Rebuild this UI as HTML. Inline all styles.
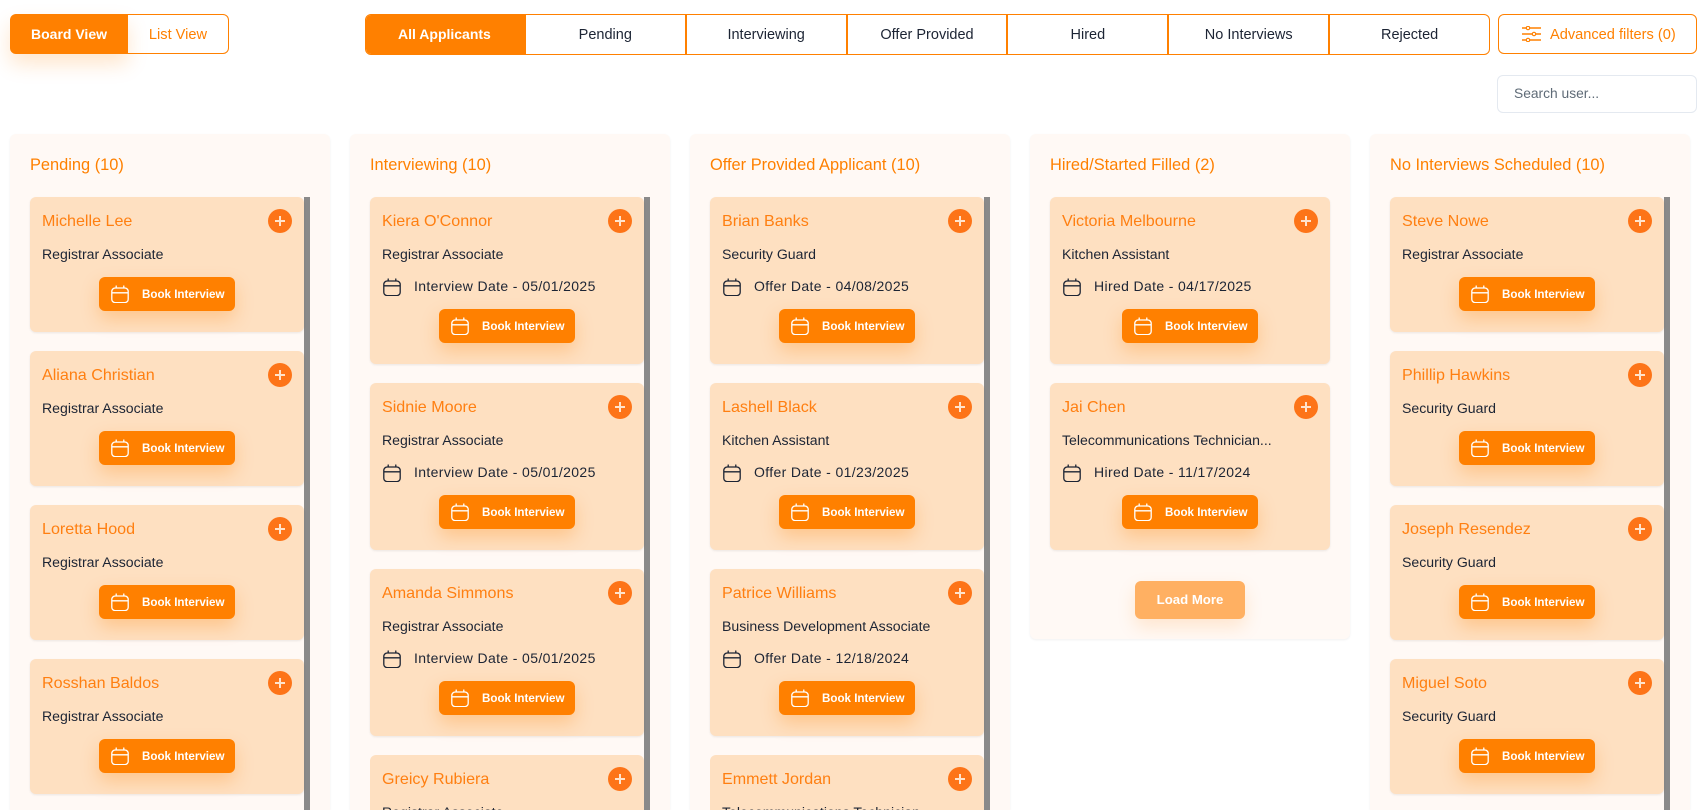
<!DOCTYPE html>
<html lang="en">
<head>
<meta charset="utf-8">
<title>Applicants Board</title>
<style>
*{box-sizing:border-box;margin:0;padding:0}
html,body{width:1708px;height:810px;overflow:hidden;background:#fff}
body{position:relative;font-family:"Liberation Sans",sans-serif;color:#1c2434;font-size:14px}
.view{position:absolute;top:14px;height:40px;text-align:center;font-size:14px}
#bv{left:10px;width:118px;background:#ff8000;color:#fff;font-weight:bold;border-radius:6px 0 0 6px;box-shadow:0 10px 20px rgba(255,128,0,.2);line-height:40px}
#lv{left:128px;width:101px;border:1px solid #ff8000;border-left:0;color:#ff8000;border-radius:0 6px 6px 0;line-height:40px;font-size:14.6px}
#tabs{position:absolute;left:365px;top:14px;width:1125px;height:41px;border:1px solid #ff8000;border-radius:6px;display:flex;overflow:hidden;background:#fff}
#tabs div{flex:1;line-height:40px;text-align:center;font-size:14.5px;color:#1c2434;border-left:2px solid #ff8000}
#tabs div:first-child{border-left:0;background:#ff8000;color:#fff;font-weight:bold;font-size:14px;margin:-1px 0 -1px -1px;line-height:41px}
#adv{position:absolute;left:1498px;top:14px;width:199px;height:40px;border:1px solid #ff8000;border-radius:6px;color:#ff8000;font-size:14.6px;line-height:40px;padding-left:51px}
#adv svg{position:absolute;left:23px;top:11px}
#search{position:absolute;left:1497px;top:75px;width:200px;height:38px;border:1px solid #e4e9f0;border-radius:6px;line-height:35px;padding-left:16px;color:#5f6b77;font-size:13.800px}
.col{position:absolute;top:134px;width:320px;height:676px;overflow:hidden;background:#fff9f5;border-radius:6px 6px 0 0;box-shadow:0 1px 2px rgba(0,0,0,.06)}
.col.short{height:505px;border-radius:6px}
.col h3{position:absolute;left:20px;top:21px;font-weight:normal;font-size:16.400px;line-height:20px;color:#ff8000;white-space:nowrap}
.bar{position:absolute;left:294px;top:63px;width:6px;height:613px;background:#8a8a8a}
.card{position:absolute;left:20px;width:274px;height:135px;background:#fee0c1;border-radius:6px;box-shadow:0 1px 2px rgba(0,0,0,.08)}
.short .card{width:280px}
.card.d{height:167px}
.card.cut{height:55px;overflow:hidden;border-radius:6px 6px 0 0;box-shadow:none}
.n{position:absolute;left:12px;top:14px;font-size:16.100px;line-height:20px;color:#ff7f11;white-space:nowrap}
.p{position:absolute;left:238px;top:12px;width:24px;height:24px;border-radius:50%;background:#fd7418}
.short .p{left:244px}
.p:before{content:"";position:absolute;left:7px;top:11.200px;width:10px;height:1.600px;background:#ffe3cc}
.p:after{content:"";position:absolute;left:11.200px;top:7px;width:1.600px;height:10px;background:#ffe3cc}
.r{position:absolute;left:12px;top:48px;font-size:14.100px;line-height:18px;white-space:nowrap;color:#1c2434}
.i{position:absolute;left:13px;top:81px}
.dt{position:absolute;left:44px;top:80px;font-size:14px;letter-spacing:.36px;line-height:18px;white-space:nowrap;color:#1c2434}
.b{position:absolute;left:69px;top:80px;width:136px;height:34px;background:#ff8000;border-radius:6px;box-shadow:0 8px 18px rgba(255,128,0,.28);color:#fff;font-weight:bold;font-size:11.600px;line-height:35px;padding-left:43px;white-space:nowrap}
.short .b{left:72px}
.d .b{top:112px}
.b svg{position:absolute;left:12px;top:8px}
#lm{position:absolute;left:105px;top:447px;width:110px;height:38px;background:#ffb062;border-radius:6px;color:#fff;font-weight:bold;font-size:13.200px;line-height:37px;text-align:center;box-shadow:0 8px 18px rgba(255,128,0,.16)}
</style>
</head>
<body>
<svg width="0" height="0" style="position:absolute"><defs>
<symbol id="cal" viewBox="0 0 18 18"><path d="M4.2 3h9.6a3.4 3.4 0 0 1 3.4 3.4v7.8a3.4 3.4 0 0 1-3.4 3.4H4.2a3.4 3.4 0 0 1-3.4-3.4V6.400a3.400 3.400 0 0 1 3.400-3.400zM.8 7.800h16.400M5.200 1v2M12.800 1v2" fill="none" stroke="currentColor" stroke-width="1.300" stroke-linecap="round"/></symbol>
</defs></svg>

<div class="view" id="bv">Board View</div>
<div class="view" id="lv">List View</div>

<div id="tabs"><div>All Applicants</div><div>Pending</div><div>Interviewing</div><div>Offer Provided</div><div>Hired</div><div>No Interviews</div><div>Rejected</div></div>

<div id="adv"><svg width="19" height="16" viewBox="0 0 19 16"><path d="M0 2h4M8 2h11M0 8h10M14 8h5M0 14h4M8 14h11" stroke="#ff8000" stroke-width="1.4" fill="none"/><circle cx="6" cy="2" r="1.7" fill="none" stroke="#ff8000" stroke-width="1.2"/><circle cx="12" cy="8" r="1.7" fill="none" stroke="#ff8000" stroke-width="1.2"/><circle cx="6" cy="14" r="1.7" fill="none" stroke="#ff8000" stroke-width="1.2"/></svg>Advanced filters (0)</div>
<div id="search">Search user...</div>

<div class="col" style="left:10px">
<h3>Pending (10)</h3><div class="bar"></div>
<div class="card" style="top:63px"><div class="n">Michelle Lee</div><div class="p"></div><div class="r">Registrar Associate</div><div class="b"><svg width="18" height="18"><use href="#cal"/></svg>Book Interview</div></div>
<div class="card" style="top:217px"><div class="n">Aliana Christian</div><div class="p"></div><div class="r">Registrar Associate</div><div class="b"><svg width="18" height="18"><use href="#cal"/></svg>Book Interview</div></div>
<div class="card" style="top:371px"><div class="n">Loretta Hood</div><div class="p"></div><div class="r">Registrar Associate</div><div class="b"><svg width="18" height="18"><use href="#cal"/></svg>Book Interview</div></div>
<div class="card" style="top:525px"><div class="n">Rosshan Baldos</div><div class="p"></div><div class="r">Registrar Associate</div><div class="b"><svg width="18" height="18"><use href="#cal"/></svg>Book Interview</div></div>
</div>

<div class="col" style="left:350px">
<h3>Interviewing (10)</h3><div class="bar"></div>
<div class="card d" style="top:63px"><div class="n">Kiera O'Connor</div><div class="p"></div><div class="r">Registrar Associate</div><svg class="i" width="18" height="18"><use href="#cal"/></svg><div class="dt">Interview Date - 05/01/2025</div><div class="b"><svg width="18" height="18"><use href="#cal"/></svg>Book Interview</div></div>
<div class="card d" style="top:249px"><div class="n">Sidnie Moore</div><div class="p"></div><div class="r">Registrar Associate</div><svg class="i" width="18" height="18"><use href="#cal"/></svg><div class="dt">Interview Date - 05/01/2025</div><div class="b"><svg width="18" height="18"><use href="#cal"/></svg>Book Interview</div></div>
<div class="card d" style="top:435px"><div class="n">Amanda Simmons</div><div class="p"></div><div class="r">Registrar Associate</div><svg class="i" width="18" height="18"><use href="#cal"/></svg><div class="dt">Interview Date - 05/01/2025</div><div class="b"><svg width="18" height="18"><use href="#cal"/></svg>Book Interview</div></div>
<div class="card cut" style="top:621px"><div class="n">Greicy Rubiera</div><div class="p"></div><div class="r">Registrar Associate</div></div>
</div>

<div class="col" style="left:690px">
<h3>Offer Provided Applicant (10)</h3><div class="bar"></div>
<div class="card d" style="top:63px"><div class="n">Brian Banks</div><div class="p"></div><div class="r">Security Guard</div><svg class="i" width="18" height="18"><use href="#cal"/></svg><div class="dt">Offer Date - 04/08/2025</div><div class="b"><svg width="18" height="18"><use href="#cal"/></svg>Book Interview</div></div>
<div class="card d" style="top:249px"><div class="n">Lashell Black</div><div class="p"></div><div class="r">Kitchen Assistant</div><svg class="i" width="18" height="18"><use href="#cal"/></svg><div class="dt">Offer Date - 01/23/2025</div><div class="b"><svg width="18" height="18"><use href="#cal"/></svg>Book Interview</div></div>
<div class="card d" style="top:435px"><div class="n">Patrice Williams</div><div class="p"></div><div class="r">Business Development Associate</div><svg class="i" width="18" height="18"><use href="#cal"/></svg><div class="dt">Offer Date - 12/18/2024</div><div class="b"><svg width="18" height="18"><use href="#cal"/></svg>Book Interview</div></div>
<div class="card cut" style="top:621px"><div class="n">Emmett Jordan</div><div class="p"></div><div class="r">Telecommunications Technician</div></div>
</div>

<div class="col short" style="left:1030px">
<h3>Hired/Started Filled (2)</h3>
<div class="card d" style="top:63px"><div class="n">Victoria Melbourne</div><div class="p"></div><div class="r">Kitchen Assistant</div><svg class="i" width="18" height="18"><use href="#cal"/></svg><div class="dt">Hired Date - 04/17/2025</div><div class="b"><svg width="18" height="18"><use href="#cal"/></svg>Book Interview</div></div>
<div class="card d" style="top:249px"><div class="n">Jai Chen</div><div class="p"></div><div class="r">Telecommunications Technician...</div><svg class="i" width="18" height="18"><use href="#cal"/></svg><div class="dt">Hired Date - 11/17/2024</div><div class="b"><svg width="18" height="18"><use href="#cal"/></svg>Book Interview</div></div>
<div id="lm">Load More</div>
</div>

<div class="col" style="left:1370px">
<h3>No Interviews Scheduled (10)</h3><div class="bar"></div>
<div class="card" style="top:63px"><div class="n">Steve Nowe</div><div class="p"></div><div class="r">Registrar Associate</div><div class="b"><svg width="18" height="18"><use href="#cal"/></svg>Book Interview</div></div>
<div class="card" style="top:217px"><div class="n">Phillip Hawkins</div><div class="p"></div><div class="r">Security Guard</div><div class="b"><svg width="18" height="18"><use href="#cal"/></svg>Book Interview</div></div>
<div class="card" style="top:371px"><div class="n">Joseph Resendez</div><div class="p"></div><div class="r">Security Guard</div><div class="b"><svg width="18" height="18"><use href="#cal"/></svg>Book Interview</div></div>
<div class="card" style="top:525px"><div class="n">Miguel Soto</div><div class="p"></div><div class="r">Security Guard</div><div class="b"><svg width="18" height="18"><use href="#cal"/></svg>Book Interview</div></div>
</div>
</body>
</html>
